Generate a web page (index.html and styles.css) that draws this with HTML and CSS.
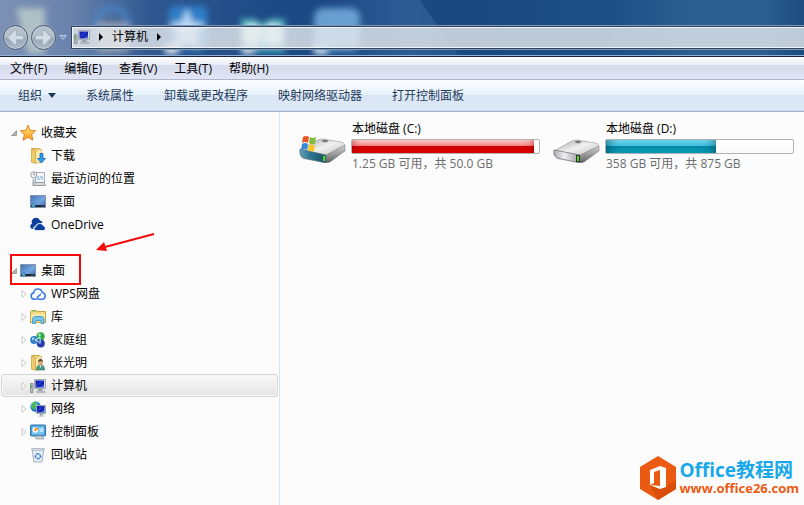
FILE: index.html
```html
<!DOCTYPE html>
<html lang="zh-CN">
<head>
  <meta charset="UTF-8">
  <meta name="viewport" content="width=device-width, initial-scale=1.0">
  <title>计算机</title>
  <link rel="stylesheet" href="styles.css">
</head>
<body>

  <!-- shared gradients and icons -->
  <svg class="defs" aria-hidden="true">
    <defs>
      <linearGradient id="screen" x1="0" y1="0" x2="1" y2="1">
        <stop offset="0" stop-color="#0a12a0"/><stop offset=".5" stop-color="#2438d0"/><stop offset=".55" stop-color="#0714a0"/><stop offset="1" stop-color="#4a78e8"/>
      </linearGradient>
      <linearGradient id="desk" x1="0" y1="0" x2="1" y2="1">
        <stop offset="0" stop-color="#1d4e94"/><stop offset=".6" stop-color="#6ea3de"/><stop offset="1" stop-color="#2c62ab"/>
      </linearGradient>
      <linearGradient id="folder" x1="0" y1="0" x2="1" y2="0">
        <stop offset="0" stop-color="#e3bd55"/><stop offset="1" stop-color="#fbe9a4"/>
      </linearGradient>
      <linearGradient id="star" x1="0" y1="0" x2="0" y2="1">
        <stop offset="0" stop-color="#ffe27a"/><stop offset="1" stop-color="#ff9d1c"/>
      </linearGradient>
      <linearGradient id="diskTop" x1="0" y1="0" x2="1" y2="1">
        <stop offset="0" stop-color="#a2a2a2"/><stop offset=".5" stop-color="#f1f1f1"/><stop offset="1" stop-color="#bcbcbc"/>
      </linearGradient>
      <linearGradient id="diskFront" x1="0" y1="0" x2="1" y2="0">
        <stop offset="0" stop-color="#a9a9ae"/><stop offset=".4" stop-color="#eeeef2"/><stop offset="1" stop-color="#9a9a9d"/>
      </linearGradient>
      <linearGradient id="diskGlass" x1="0" y1="0" x2="1" y2="0">
        <stop offset="0" stop-color="#63a0b8"/><stop offset=".4" stop-color="#2d7590"/><stop offset="1" stop-color="#185064"/>
      </linearGradient>
      <linearGradient id="diskSide" x1="0" y1="0" x2="0" y2="1">
        <stop offset="0" stop-color="#d4d4d4"/><stop offset="1" stop-color="#606060"/>
      </linearGradient>
      <radialGradient id="globe" cx=".35" cy=".3" r=".8">
        <stop offset="0" stop-color="#b9ecff"/><stop offset=".5" stop-color="#2996d8"/><stop offset="1" stop-color="#0b4c9c"/>
      </radialGradient>
      <linearGradient id="streak" x1="0" y1="0" x2="1" y2="0">
        <stop offset="0" stop-color="#4772ac" stop-opacity="0"/><stop offset=".6" stop-color="#4772ac" stop-opacity=".45"/><stop offset="1" stop-color="#4772ac" stop-opacity=".3"/>
      </linearGradient>
      <filter id="soft" x="-30%" y="-30%" width="160%" height="160%"><feGaussianBlur stdDeviation="3"/></filter>
    </defs>
    <symbol id="i-desktop" viewBox="0 0 16 16">
      <path d="M.5 1.500h15v12H.5z" fill="url(#desk)" stroke="#8095ad"/>
      <path d="M1 11h14v2H1z" fill="#20262e"/>
      <path d="M1 2h14v4L1 10z" fill="#8fbdf0" opacity=".3"/>
      <circle cx="3.500" cy="11.500" r="2" fill="#2c8de0"/>
      <path d="M2.500 10.500h1v1h-1z" fill="#ffb02e"/><path d="M3.500 11.500h1v1h-1z" fill="#9be25a"/>
      <path d="M11 12h3" stroke="#4d5a68"/>
    </symbol>
    <symbol id="i-computer" viewBox="0 0 16 16">
      <path d="M.5 5.500h2.500v9H.5z" fill="#b9bdc2" stroke="#8c9299"/>
      <path d="M1.500 7v3" stroke="#42c330"/>
      <path d="M4.500 1.500h11v9h-11z" fill="#d6dbe2" stroke="#a4aab3"/>
      <path d="M5.500 2.500h8.500v7H5.500z" fill="url(#screen)"/>
      <path d="M8 11h4.500v2H8z" fill="#9ca1a8"/>
      <path d="M6.500 13h8l1 1.500h-9z" fill="#c3c7cd" stroke="#989ea6" stroke-width=".5"/>
    </symbol>
    <symbol id="i-folder" viewBox="0 0 16 16">
      <path d="M2 .5h7l2 1v13H2z" fill="url(#folder)" stroke="#cda745"/>
      <path d="M5.500 3.500l4-2h2v12l-6 2z" fill="#fbeab0" stroke="#d9b95e" stroke-width=".7"/>
      <path d="M1.500.8l4 2.700v12l-4-1.500z" fill="#efcc6b" stroke="#cda745" stroke-width=".7"/>
    </symbol>
  </svg>

  <header class="titlebar">
    <svg class="glass" viewBox="0 0 804 55" preserveAspectRatio="xMinYMin slice" aria-hidden="true">
      <path d="M330 0h90l38 55H350z" fill="url(#streak)"/>
      <g filter="url(#soft)">
        <path d="M16 8h29v46H28z" fill="#c9d7cf" opacity=".7"/>
        <circle cx="112" cy="24" r="16" fill="none" stroke="#4787cc" stroke-width="6" opacity=".7"/>
        <path d="M97 23h32v29H97z" fill="#c4beb2" opacity=".7"/>
        <rect x="169" y="6" width="38" height="44" rx="6" fill="#2f7fc9"/>
        <path d="M187 8l5 14 14 2-11 9 4 16-12-9-12 9 4-16-11-9 14-2z" fill="#c9e5fa" opacity=".9"/>
        <path d="M241 19h14l7 5 8-5h15v33h-44z" fill="#4eb4bd"/>
        <circle cx="252" cy="34" r="10" fill="#d9f5f5"/><circle cx="273" cy="34" r="10" fill="#d9f5f5"/>
        <path d="M165 45h13v9h-13zM242 48h12v6h-12zM314 44h14v10h-14z" fill="#e4eaee"/>
      </g>
      <rect x="314" y="8" width="46" height="43" rx="9" fill="#76aede" opacity=".85" filter="url(#soft)"/>
    </svg>

    <div class="nav-buttons">
      <button class="round" aria-label="后退"><svg viewBox="0 0 16 16"><path d="M1 8l6-6h2v4h6v4H9v4H7z"/></svg></button>
      <button class="round" aria-label="前进"><svg viewBox="0 0 16 16"><path d="M15 8L9 2H7v4H1v4h6v4h2z"/></svg></button>
      <button class="recent" aria-label="最近的页面"><svg viewBox="0 0 8 5"><path d="M.5.500h7L4 4.500z"/></svg></button>
    </div>

    <nav class="address" aria-label="地址">
      <svg class="icon"><use href="#i-computer"/></svg>
      <svg class="sep" viewBox="0 0 4 8"><path d="M0 0l4 4-4 4z"/></svg>
      <a href="#">计算机</a>
      <svg class="sep" viewBox="0 0 4 8"><path d="M0 0l4 4-4 4z"/></svg>
    </nav>
  </header>

  <div class="menubar">
    <button>文件(F)</button>
    <button>编辑(E)</button>
    <button>查看(V)</button>
    <button>工具(T)</button>
    <button>帮助(H)</button>
  </div>

  <div class="toolbar">
    <button>组织 <svg class="caret" viewBox="0 0 8 5"><path d="M0 0h8L4 5z"/></svg></button>
    <button>系统属性</button>
    <button>卸载或更改程序</button>
    <button>映射网络驱动器</button>
    <button>打开控制面板</button>
  </div>

  <div class="main">
    <aside class="sidebar">
      <ul class="tree">
        <li class="row root">
          <button class="toggle open" aria-label="折叠"><svg viewBox="0 0 8 8"><path d="M6.500 1.500v5H1.500z"/></svg></button>
          <a href="#"><svg class="icon" viewBox="0 0 16 16"><path d="M8 .3l2.300 5 5.400.5-4 3.700 1.200 5.700L8 12.300l-4.900 2.900 1.200-5.700-4-3.700 5.400-.5z" fill="url(#star)" stroke="#dc7b1d" stroke-width=".9"/></svg>收藏夹</a>
        </li>
        <li class="row">
          <span class="toggle"></span>
          <a href="#"><svg class="icon" viewBox="0 0 16 16"><use href="#i-folder" width="16" height="16"/><path d="M10 5.500h3v5h2.500L11.500 15l-4-4.500H10z" fill="#2f9bea" stroke="#1769b5" stroke-width=".8"/></svg>下载</a>
        </li>
        <li class="row">
          <span class="toggle"></span>
          <a href="#"><svg class="icon" viewBox="0 0 16 16"><path d="M5.500 1.500h9v10h-9z" fill="#f5f8fb" stroke="#a5adb6"/><path d="M7 6h2m1 0h3M7 8h3m1 0h2" stroke="#6ba4dc"/><path d="M3 11.500h11l1.500 3H3z" fill="#d4d9dd" stroke="#969ca2"/><path d="M3.500 8v6" stroke="#b0b5ba" stroke-width="2"/><circle cx="3.800" cy="3.800" r="3" fill="#fff" stroke="#8d969e"/><path d="M3.800 2v2h1.500" fill="none" stroke="#555" stroke-width=".7"/></svg>最近访问的位置</a>
        </li>
        <li class="row">
          <span class="toggle"></span>
          <a href="#"><svg class="icon"><use href="#i-desktop"/></svg>桌面</a>
        </li>
        <li class="row">
          <span class="toggle"></span>
          <a href="#"><svg class="icon" viewBox="0 0 16 16"><path d="M2.500 12A2.700 2.700 0 012 6.800 4.300 4.300 0 0110 3.400 3 3 0 0112.500 6C8 5.500 6 7 5.500 9 3.500 9.200 3 11 3.500 12z" fill="#0b3f9e"/><path d="M6.200 13.500a2 2 0 01-.2-4 3.800 3.800 0 017.200-.8 2.600 2.600 0 01.8 4.800z" fill="#0b3f9e" stroke="#fff" stroke-width=".7"/></svg>OneDrive</a>
        </li>
      </ul>

      <ul class="tree">
        <li class="row root marked">
          <button class="toggle open" aria-label="折叠"><svg viewBox="0 0 8 8"><path d="M6.500 1.500v5H1.500z"/></svg></button>
          <a href="#"><svg class="icon"><use href="#i-desktop"/></svg>桌面</a>
          <svg class="mark" viewBox="0 0 150 56" aria-hidden="true">
            <path d="M2 23h69v29H2z" fill="none" stroke="#f60a0a" stroke-width="2"/>
            <path d="M145 2L96 15" stroke="#f60a0a" stroke-width="2"/>
            <path d="M87 18l8-8 3 9z" fill="#f60a0a"/>
          </svg>
        </li>
        <li class="row">
          <button class="toggle" aria-label="展开"><svg viewBox="0 0 8 8"><path d="M2 .5L6 4 2 7.500z"/></svg></button>
          <a href="#"><svg class="icon" viewBox="0 0 16 16"><path d="M6.500 13.200H4a3.200 3.200 0 01-.3-6.300 4.300 4.300 0 018.500-.4A3.400 3.400 0 0112.500 13.200H8.500c-2 0-1.500-2.500.5-3.500 1-.5 1.500-1 1.500-2" fill="none" stroke="#3c79e6" stroke-width="1.600"/></svg>WPS网盘</a>
        </li>
        <li class="row">
          <button class="toggle" aria-label="展开"><svg viewBox="0 0 8 8"><path d="M2 .5L6 4 2 7.500z"/></svg></button>
          <a href="#"><svg class="icon" viewBox="0 0 16 16"><path d="M.5 2.500l1-1h5l1 1h8v11H.5z" fill="#f6d982" stroke="#c9a347"/><path d="M2 2h4" stroke="#6fbb58"/><path d="M1 5h14v7H1z" fill="#fbebad"/><path d="M2.500 14.500v-4c0-2 1-3 3-3h5.500c2 0 3 1 3 3v4h-3v-3h-5.500v3z" fill="#7ac6ea" stroke="#4b9dc9"/></svg>库</a>
        </li>
        <li class="row">
          <button class="toggle" aria-label="展开"><svg viewBox="0 0 8 8"><path d="M2 .5L6 4 2 7.500z"/></svg></button>
          <a href="#"><svg class="icon" viewBox="0 0 16 16"><circle cx="10.500" cy="4.500" r="4.200" fill="#2aa84a"/><circle cx="4" cy="8" r="3.900" fill="#3580cf"/><circle cx="10.800" cy="11.500" r="4" fill="#263fae"/><path d="M5 8l5-3 .3 6z" fill="none" stroke="#d5edf5"/><circle cx="9.500" cy="3" r="1.400" fill="#a5ecac"/><circle cx="3" cy="6.700" r="1.200" fill="#b5def8"/><circle cx="9.600" cy="10.500" r="1.200" fill="#8ca2f0"/></svg>家庭组</a>
        </li>
        <li class="row">
          <button class="toggle" aria-label="展开"><svg viewBox="0 0 8 8"><path d="M2 .5L6 4 2 7.500z"/></svg></button>
          <a href="#"><svg class="icon" viewBox="0 0 16 16"><use href="#i-folder" width="16" height="16"/><path d="M6.500 15c0-4 1.500-5 4-5s4 1 4 5z" fill="#4c9b83" stroke="#2f6c5b" stroke-width=".6"/><circle cx="10.500" cy="7.500" r="2.500" fill="#d9a57b"/><path d="M8 7c0-4 5-4 5 0-1-1.500-3-1.500-5 0z" fill="#59412c"/><path d="M9.500 10.500h2L10.500 13z" fill="#fff"/></svg>张光明</a>
        </li>
        <li class="row selected">
          <button class="toggle" aria-label="展开"><svg viewBox="0 0 8 8"><path d="M2 .5L6 4 2 7.500z"/></svg></button>
          <a href="#"><svg class="icon"><use href="#i-computer"/></svg>计算机</a>
        </li>
        <li class="row">
          <button class="toggle" aria-label="展开"><svg viewBox="0 0 8 8"><path d="M2 .5L6 4 2 7.500z"/></svg></button>
          <a href="#"><svg class="icon" viewBox="0 0 16 16"><circle cx="5.500" cy="5.500" r="5.200" fill="url(#globe)"/><path d="M2 3c2-2 4-2.500 5-1.500L5 4l1 2-2 3C2 8 1 6 2 3zM8 3l2 2-1 2-2-2z" fill="#48b94b"/><path d="M6.500 4.500h9v8h-9z" fill="#cbd2db" stroke="#9aa4b0"/><path d="M7 5h7.500v6.500H7z" fill="url(#screen)"/><path d="M10 12.500h2.500v2H10z" fill="#989fa8"/><path d="M8.500 15h6" stroke="#adb3ba"/></svg>网络</a>
        </li>
        <li class="row">
          <button class="toggle" aria-label="展开"><svg viewBox="0 0 8 8"><path d="M2 .5L6 4 2 7.500z"/></svg></button>
          <a href="#"><svg class="icon" viewBox="0 0 16 16"><rect x=".5" y="1" width="15" height="11" rx="1" fill="#4ba0dc" stroke="#2e74ad"/><path d="M2 2.500h12v8H2z" fill="#77c2ee"/><circle cx="5.300" cy="6" r="2.700" fill="#fff"/><path d="M5.300 6V3.300A2.700 2.700 0 018 6z" fill="#f49424"/><circle cx="5.300" cy="6" r="1.200" fill="#f49424"/><path d="M9.500 5h4m-4 2h4" stroke="#fff"/><path d="M5 12h7l2 3H6z" fill="#cdd2d7" stroke="#8b949d" stroke-width=".7"/></svg>控制面板</a>
        </li>
        <li class="row">
          <span class="toggle"></span>
          <a href="#"><svg class="icon" viewBox="0 0 16 16"><path d="M2 2l2 13h8l2-13z" fill="#e6edf3" stroke="#a5b2be"/><path d="M1.500 1.500h13l-1 2h-11z" fill="#cfd9e2" stroke="#a5b2be" stroke-width=".6"/><path d="M6.500 7h3l1.200 2.500L9.500 11.500h-3L5.300 9.500z" fill="none" stroke="#3d84d0" stroke-width="1.500" stroke-dasharray="3 1"/></svg>回收站</a>
        </li>
      </ul>
    </aside>

    <main class="drives">
      <a class="drive" href="#">
        <svg class="disk" viewBox="0 0 48 32" aria-hidden="true">
          <path d="M3 28l25 4 19-14-3-1z" fill="#000" opacity=".15"/>
          <path d="M1 19L19 9q2-1 5-1l18 3q5 1 3 5L27 25z" fill="url(#diskTop)" stroke="#999" stroke-width=".6"/>
          <path d="M1 18l26 6v8L4 27q-4-2-3-9z" fill="url(#diskGlass)" stroke="#55727d" stroke-width=".7"/>
          <path d="M27 24l19-10v6L31 31q-2 1-4 1z" fill="url(#diskSide)" stroke="#777" stroke-width=".5"/>
          <ellipse cx="26" cy="10" rx="3" ry="1.200" fill="#777"/>
          <path d="M25 25v5" stroke="#4ed91c" stroke-width="2"/>
          <path d="M4 6q3-2 6 0L9 12Q6 10 3 12z" fill="#e8572a"/>
          <path d="M11 6q3 2 6 0l-1 7q-4 1-6-1z" fill="#7fbd38"/>
          <path d="M3 13q3-2 6 0l-1 6q-3-2-6 0z" fill="#358bd8"/>
          <path d="M10 13q3 2 6 1l-1 6q-4 1-6-1z" fill="#fac522"/>
        </svg>
        <div class="info">
          <div class="name">本地磁盘 (C:)</div>
          <div class="bar full" role="meter" aria-label="C 盘已用空间" aria-valuemin="0" aria-valuemax="100" aria-valuenow="97"><div class="used" style="width: 97.5%"></div></div>
          <div class="space">1.25 GB 可用，共 50.0 GB</div>
        </div>
      </a>

      <a class="drive" href="#">
        <svg class="disk" viewBox="0 0 48 32" aria-hidden="true">
          <path d="M3 28l25 4 19-14-3-1z" fill="#000" opacity=".15"/>
          <path d="M1 20L19 10q2-1 5-1l18 3q5 1 3 4L27 25z" fill="url(#diskTop)" stroke="#999" stroke-width=".6"/>
          <path d="M1 19l26 5v8L4 27q-4-2-3-8z" fill="url(#diskFront)" stroke="#6c6c6c" stroke-width=".7"/>
          <path d="M27 24l19-9v5L31 31q-2 1-4 1z" fill="url(#diskSide)" stroke="#777" stroke-width=".5"/>
          <ellipse cx="25" cy="11" rx="3" ry="1.200" fill="#777"/>
          <path d="M25 24v7" stroke="#333" stroke-width="4"/>
          <path d="M25 25v5" stroke="#4ed91c" stroke-width="2"/>
        </svg>
        <div class="info">
          <div class="name">本地磁盘 (D:)</div>
          <div class="bar" role="meter" aria-label="D 盘已用空间" aria-valuemin="0" aria-valuemax="100" aria-valuenow="59"><div class="used" style="width: 59%"></div></div>
          <div class="space">358 GB 可用，共 875 GB</div>
        </div>
      </a>
    </main>
  </div>

  <a class="watermark" href="#">
    <svg viewBox="0 0 36 44" aria-hidden="true">
      <path d="M18 0l18 11v22L18 44 0 33V11z" fill="#eb5a12"/>
      <path d="M25 31l11-7v9L18 44l-8-14z" fill="#d94f0a"/>
      <path d="M10 14l10-4 6 2v19l-6 2-10-4 10 1V14l-6 2v11l-4 2z" fill="#fff"/>
    </svg>
    <span class="words">
      <span class="brand">Office教程网</span>
      <span class="site">www.office26.com</span>
    </span>
  </a>

</body>
</html>
```

FILE: styles.css
```css
* {
  box-sizing: border-box;
}

body {
  position: relative;
  display: flex;
  flex-direction: column;
  min-height: 100vh;
  margin: 0;
  background: #fcfcfc;
  color: #000;
  font-family: "Open Sans", "Noto Sans CJK SC", sans-serif;
  font-size: 12px;
  line-height: 16px;
}

button {
  padding: 0;
  border: none;
  background: none;
  color: inherit;
  font: inherit;
  cursor: pointer;
}

a {
  color: inherit;
  text-decoration: none;
}

svg {
  display: block;
  flex: none;
}

.defs {
  position: absolute;
  width: 0;
  height: 0;
}

.icon {
  width: 16px;
  height: 16px;
}

/* title bar */
.titlebar {
  position: relative;
  display: flex;
  align-items: center;
  height: 57px;
  padding: 18px 0 0 3px;
  border-bottom: 1px solid #14233f;
  box-shadow: inset 0 -1px #8fb3d8;
  background: linear-gradient(90deg, #7c91b4 0, #6a83ad 70px, #30588f 150px, #1d4a86 270px, #194980 60%, #1d4f86 76%, #2c5e90 86%, #2c5e90 95%, #1c4c80 100%);
}

.glass {
  position: absolute;
  top: 0;
  left: 0;
  width: 100%;
  height: 55px;
}

.nav-buttons {
  position: relative;
  display: flex;
  align-items: center;
  gap: 3px;
  width: 68px;
}

.round {
  display: flex;
  align-items: center;
  justify-content: center;
  width: 25px;
  height: 25px;
  border: 1px solid #46586f;
  border-radius: 50%;
  box-shadow: inset 0 0 0 1px #c3cfdb, 0 0 1px #dce5ee;
  background: linear-gradient(#b4c1cc 50%, #90a2b4 50%, #b2bfca);
}

.round svg {
  width: 19px;
  height: 19px;
  fill: #d3dce4;
  stroke: #a5b4c3;
}

.recent svg {
  width: 8px;
  height: 5px;
  fill: #7e98bf;
  stroke: #b7c9e0;
}

.address {
  position: relative;
  display: flex;
  flex: 1;
  align-items: center;
  gap: 9px;
  height: 23px;
  padding-left: 2px;
  border: 1px solid #31435e;
  border-right: none;
  box-shadow: inset 1px 1px #f0f4f8, inset 0 -1px #f0f4f8, 0 -1px #7d97b8, 0 1px #7d9ab5;
  background: rgba(230, 234, 238, .8);
}

.sep {
  width: 4px;
  height: 8px;
}

/* menu and command bars */
.menubar,
.toolbar {
  display: flex;
  align-items: center;
  white-space: nowrap;
}

.menubar {
  gap: 17px;
  height: 23px;
  padding: 2px 0 0 10px;
  border-bottom: 1px solid #b0b6ca;
  background: linear-gradient(#fff 0, #e9ecf5 8px, #d5daec 8px, #e1e5f5 100%);
}

.toolbar {
  gap: 30px;
  height: 32px;
  padding-left: 18px;
  border-bottom: 1px solid #9fb2cb;
  box-shadow: inset 0 -1px #cfdeee;
  background: linear-gradient(#fbfdff 0, #e7f2fb 15px, #dae6f4 15px, #dce8f6 100%);
  color: #1e395b;
}

.toolbar button {
  display: flex;
  align-items: center;
  gap: 6px;
}

.caret {
  width: 8px;
  height: 5px;
  fill: #1e395b;
}

/* navigation pane */
.main {
  display: flex;
  flex: 1;
}

.sidebar {
  flex: none;
  width: 280px;
  padding: 9px 1px 0;
  border-right: 1px solid #d6e4f3;
}

.tree {
  margin: 0 0 23px;
  padding: 0;
  list-style: none;
}

.row {
  display: flex;
  align-items: center;
  height: 23px;
  padding-left: 18px;
  border: 1px solid transparent;
  border-radius: 3px;
}

.row.root {
  padding-left: 8px;
}

.row a {
  display: flex;
  align-items: center;
  gap: 5px;
}

.row.selected {
  border-color: #d4d4d4;
  box-shadow: inset 0 0 0 1px #f8f8f8;
  background: linear-gradient(#f9f9f9, #e4e4e4);
}

.toggle {
  width: 8px;
  margin-right: 2px;
}

.toggle svg {
  width: 8px;
  height: 8px;
  fill: #fff;
  stroke: #c8c8c8;
}

.toggle.open svg {
  fill: #b4b4b4;
  stroke: #a0a0a0;
}

/* red frame and arrow drawn over the row */
.marked {
  position: relative;
}

.mark {
  position: absolute;
  top: -28px;
  left: 7px;
  width: 150px;
  height: 56px;
  pointer-events: none;
}

/* drives */
.drives {
  display: grid;
  flex: 1;
  grid-template-columns: repeat(auto-fill, 241px);
  gap: 13px;
  align-content: start;
  padding: 9px 0 0 19px;
}

.drive {
  display: flex;
  align-items: center;
  gap: 4px;
}

.disk {
  width: 48px;
  height: 32px;
}

.info {
  flex: 1;
}

.name,
.space {
  padding-left: 1px;
}

.space {
  color: #6d6d6d;
}

.bar {
  height: 15px;
  margin: 2px 0;
  border: 1px solid #b2b2b2;
  border-radius: 2px;
  background: linear-gradient(#fff, #fafafa);
}

.used {
  height: 100%;
  box-shadow: inset 12px 0 12px -10px rgba(0, 40, 60, .6), inset -12px 0 12px -10px rgba(0, 40, 60, .5);
  background: linear-gradient(#6fd9f2 0, #3fc0df 45%, #0585a0 45%, #0a9fbd 100%);
}

.full .used {
  box-shadow: inset 8px 0 8px -7px rgba(150, 0, 0, .5), inset -8px 0 8px -7px rgba(150, 0, 0, .5);
  background: linear-gradient(#ffd0d0 0, #f58080 45%, #cc0000 45%, #e00000 100%);
}

/* site mark in the corner */
.watermark {
  position: absolute;
  right: 5px;
  bottom: 5px;
  display: flex;
  align-items: center;
  gap: 3px;
  font-weight: 700;
}

.watermark svg {
  width: 36px;
  height: 44px;
}

.words {
  display: flex;
  flex-direction: column;
}

.brand {
  color: #19a8ea;
  font-size: 19px;
  line-height: 20px;
}

.site {
  color: #eb5a12;
  font-size: 13px;
  line-height: 16px;
}
```
